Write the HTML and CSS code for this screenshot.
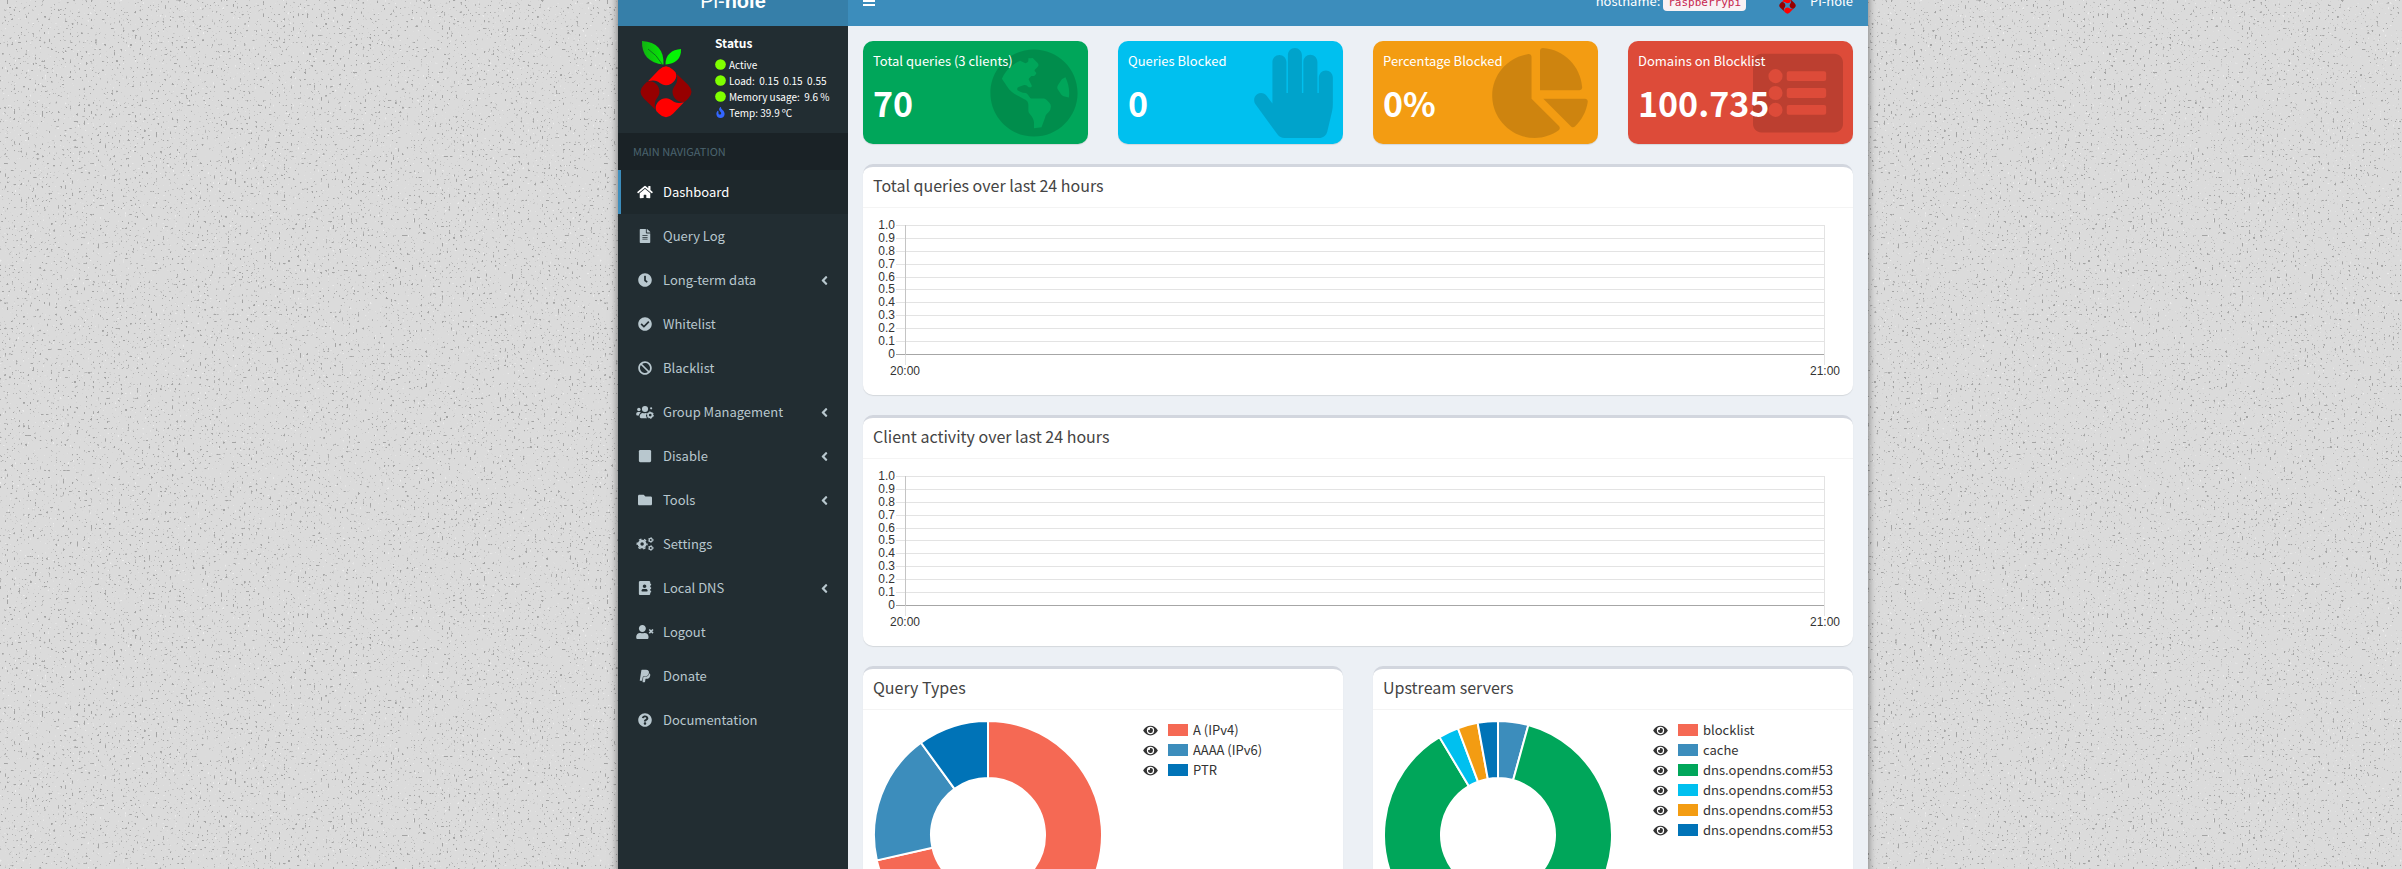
FILE: index.html
```html
<!DOCTYPE html>
<html lang="en">
<head>
<meta charset="utf-8">
<title>Pi-hole Admin Console</title>
<link rel="stylesheet" href="styles.css">
</head>
<body>
<svg class="sprite" aria-hidden="true">
  <symbol id="home" viewBox="0 0 576 512"><path d="M280.37 148.26L96 300.11V464a16 16 0 0 0 16 16l112.06-.29a16 16 0 0 0 15.92-16V368a16 16 0 0 1 16-16h64a16 16 0 0 1 16 16v95.64a16 16 0 0 0 16 16.05L464 480a16 16 0 0 0 16-16V300L295.67 148.26a12.19 12.19 0 0 0-15.3 0zM571.6 251.47L488 182.56V44.05a12 12 0 0 0-12-12h-56a12 12 0 0 0-12 12v72.61L318.47 43a48 48 0 0 0-61 0L4.34 251.47a12 12 0 0 0-1.6 16.9l25.5 31A12 12 0 0 0 45.15 301l235.22-193.74a12.19 12.19 0 0 1 15.3 0L530.9 301a12 12 0 0 0 16.9-1.6l25.5-31a12 12 0 0 0-1.7-16.93z"/></symbol>
  <symbol id="file" viewBox="0 0 384 512"><path d="M224 136V0H24C10.700 0 0 10.700 0 24v464c0 13.300 10.700 24 24 24h336c13.300 0 24-10.700 24-24V160H248c-13.200 0-24-10.800-24-24zm64 236c0 6.600-5.400 12-12 12H108c-6.600 0-12-5.400-12-12v-8c0-6.600 5.400-12 12-12h168c6.600 0 12 5.400 12 12v8zm0-64c0 6.600-5.400 12-12 12H108c-6.600 0-12-5.400-12-12v-8c0-6.600 5.400-12 12-12h168c6.600 0 12 5.400 12 12v8zm0-72v8c0 6.600-5.400 12-12 12H108c-6.600 0-12-5.400-12-12v-8c0-6.600 5.400-12 12-12h168c6.600 0 12 5.400 12 12zm96-114.100v6.100H256V0h6.100c6.400 0 12.500 2.500 17 7l97.900 98c4.500 4.500 7 10.600 7 16.900z"/></symbol>
  <symbol id="clock" viewBox="0 0 512 512"><path d="M256,8C119,8,8,119,8,256S119,504,256,504,504,393,504,256,393,8,256,8Zm92.49,313h0l-20,25a16,16,0,0,1-22.49,2.5h0l-67-49.72a40,40,0,0,1-15-31.23V112a16,16,0,0,1,16-16h32a16,16,0,0,1,16,16V256l58,42.5A16,16,0,0,1,348.49,321Z"/></symbol>
  <symbol id="check" viewBox="0 0 512 512"><path d="M504 256c0 136.967-111.033 248-248 248S8 392.967 8 256 119.033 8 256 8s248 111.033 248 248zM227.314 387.314l184-184c6.248-6.248 6.248-16.379 0-22.627l-22.627-22.627c-6.248-6.249-16.379-6.249-22.628 0L216 308.118l-70.059-70.059c-6.248-6.248-16.379-6.248-22.628 0l-22.627 22.627c-6.248 6.248-6.248 16.379 0 22.627l104 104c6.249 6.249 16.379 6.249 22.628.001z"/></symbol>
  <symbol id="ban" viewBox="0 0 512 512"><path d="M256 8C119.034 8 8 119.033 8 256s111.034 248 248 248 248-111.034 248-248S392.967 8 256 8zm130.108 117.892c65.448 65.448 70 165.481 20.677 235.637L150.47 105.216c70.204-49.356 170.226-44.735 235.638 20.676zM125.892 386.108c-65.448-65.448-70-165.481-20.677-235.637L361.53 406.784c-70.203 49.356-170.226 44.736-235.638-20.676z"/></symbol>
  <symbol id="group" viewBox="0 0 640 512"><circle cx="96" cy="160" r="64"/><circle cx="320" cy="144" r="112"/><circle cx="544" cy="120" r="40"/><path d="M64 256c-35 0-64 29-64 64v32c0 18 14 32 32 32h66c7-46 34-84 72-106-12-13-28-22-46-22zM243 288c-63 3-115 52-115 115v29c0 26 22 48 48 48h220c-20-22-32-48-36-78l-4-40 20-36 14-26c-14-7-30-11-47-12-60 28-70 8-100 0z"/><circle cx="510" cy="370" r="82" fill="none" stroke="currentColor" stroke-width="62"/><circle cx="510" cy="370" r="118" fill="none" stroke="currentColor" stroke-width="34" stroke-dasharray="62 61.600"/></symbol>
  <symbol id="square" viewBox="0 0 448 512"><path d="M400 32H48C21.500 32 0 53.500 0 80v352c0 26.500 21.500 48 48 48h352c26.500 0 48-21.500 48-48V80c0-26.500-21.500-48-48-48z"/></symbol>
  <symbol id="folder" viewBox="0 0 512 512"><path d="M464 128H272l-64-64H48C21.490 64 0 85.490 0 112v288c0 26.510 21.490 48 48 48h416c26.510 0 48-21.490 48-48V176c0-26.510-21.490-48-48-48z"/></symbol>
  <symbol id="cogs" viewBox="0 0 640 512"><g fill="none" stroke="currentColor"><circle cx="214" cy="256" r="112" stroke-width="96"/><circle cx="214" cy="256" r="178" stroke-width="52" stroke-dasharray="92 94.400" stroke-dashoffset="46"/><circle cx="530" cy="110" r="58" stroke-width="46"/><circle cx="530" cy="110" r="88" stroke-width="30" stroke-dasharray="46 46.100"/><circle cx="530" cy="402" r="58" stroke-width="46"/><circle cx="530" cy="402" r="88" stroke-width="30" stroke-dasharray="46 46.100"/></g></symbol>
  <symbol id="book" viewBox="0 0 448 512"><path d="M436 160c6.600 0 12-5.400 12-12v-40c0-6.600-5.400-12-12-12h-20V48c0-26.500-21.500-48-48-48H48C21.500 0 0 21.500 0 48v416c0 26.500 21.500 48 48 48h320c26.500 0 48-21.500 48-48v-48h20c6.600 0 12-5.400 12-12v-40c0-6.600-5.400-12-12-12h-20v-64h20c6.600 0 12-5.400 12-12v-40c0-6.600-5.400-12-12-12h-20v-64h20zm-228-32c35.300 0 64 28.700 64 64s-28.700 64-64 64-64-28.700-64-64 28.700-64 64-64zm112 236.800c0 10.600-10 19.200-22.400 19.200H118.400C106 384 96 375.400 96 364.800v-19.200c0-31.800 30.100-57.600 67.200-57.600h5c12.300 5.100 25.700 8 39.800 8s27.600-2.900 39.800-8h5c37.100 0 67.200 25.800 67.200 57.600v19.200z"/></symbol>
  <symbol id="logout" viewBox="0 0 640 512"><path d="M224 256c70.700 0 128-57.300 128-128S294.700 0 224 0 96 57.300 96 128s57.300 128 128 128zm89.600 32h-16.700c-22.200 10.200-46.900 16-72.900 16s-50.600-5.800-72.900-16h-16.700C60.200 288 0 348.200 0 422.400V464c0 26.500 21.500 48 48 48h352c26.500 0 48-21.500 48-48v-41.600c0-74.200-60.200-134.400-134.400-134.400z"/><path d="M476 164l136 136M612 164L476 300" stroke="currentColor" stroke-width="60"/></symbol>
  <symbol id="paypal" viewBox="0 0 384 512"><path d="M111.400 295.900c-3.500 19.200-17.400 108.700-21.500 134-.3 1.800-1 2.500-3 2.500H12.300c-7.600 0-13.100-6.600-12.100-13.900L58.800 46.600c1.500-9.600 10.100-16.900 20-16.900 152.300 0 165.100-3.700 204 11.400 60.100 23.300 65.600 79.500 44 140.300-21.500 62.600-72.500 89.500-140.100 90.300-43.400.7-69.500-7-75.300 24.200zM357.100 152c-1.800-1.300-2.500-1.800-3 1.300-2 11.400-5.100 22.500-8.800 33.600-39.900 113.800-150.500 103.900-204.500 103.900-6.100 0-10.100 3.300-10.900 9.400-22.600 140.400-27.100 169.700-27.100 169.700-1 7.100 3.500 12.900 10.600 12.900h63.500c8.600 0 15.700-6.300 17.400-14.900.7-5.400-1.100 6.100 14.400-91.300 4.600-22 14.300-19.700 29.300-19.700 71 0 126.400-28.800 142.900-112.300 6.500-34.800 4.600-71.400-23.800-92.600z"/></symbol>
  <symbol id="question" viewBox="0 0 512 512"><path d="M504 256c0 136.997-111.043 248-248 248S8 392.997 8 256C8 119.083 119.043 8 256 8s248 111.083 248 248zM262.655 90c-54.497 0-89.255 22.957-116.549 63.758-3.536 5.286-2.353 12.415 2.715 16.258l34.699 26.310c5.205 3.947 12.621 3.008 16.665-2.122 17.864-22.658 30.113-35.797 57.303-35.797 20.429 0 45.698 13.148 45.698 32.958 0 14.976-12.363 22.667-32.534 33.976C247.128 238.528 216 254.941 216 296v4c0 6.627 5.373 12 12 12h56c6.627 0 12-5.373 12-12v-1.333c0-28.462 83.186-29.647 83.186-106.667 0-58.002-60.165-102-116.531-102zM256 338c-25.365 0-46 20.635-46 46 0 25.364 20.635 46 46 46s46-20.636 46-46c0-25.365-20.635-46-46-46z"/></symbol>
  <symbol id="angle" viewBox="0 0 256 512"><path d="M31.700 239l136-136c9.400-9.400 24.600-9.400 33.900 0l22.600 22.600c9.400 9.400 9.400 24.600 0 33.900L127.900 256l96.400 96.400c9.400 9.400 9.400 24.600 0 33.900L201.700 409c-9.400 9.400-24.600 9.400-33.900 0l-136-136c-9.500-9.400-9.500-24.600-.1-34z"/></symbol>
  <symbol id="eye" viewBox="0 0 576 512"><path d="M572.520 241.400C518.290 135.590 410.930 64 288 64S57.680 135.640 3.480 241.410a32.350 32.350 0 0 0 0 29.190C57.710 376.410 165.070 448 288 448s230.320-71.640 284.520-177.410a32.350 32.350 0 0 0 0-29.190zM288 400a144 144 0 1 1 144-144 143.930 143.930 0 0 1-144 144zm0-240a95.310 95.310 0 0 0-25.310 3.790 47.850 47.850 0 0 1-66.900 66.900A95.780 95.780 0 1 0 288 160z"/></symbol>
  <symbol id="fire" viewBox="0 0 384 512"><path d="M216 23.860c0-23.800-30.650-32.770-44.150-13.040C48 191.850 224 200 224 288c0 35.630-29.110 64.460-64.850 63.990-35.170-.45-63.150-29.770-63.150-64.940v-85.510c0-21.700-26.470-32.230-41.430-16.500C27.800 213.160 0 261.330 0 320c0 105.870 86.130 192 192 192s192-86.130 192-192c0-170.290-168-193-168-296.140z"/></symbol>
  <symbol id="dot" viewBox="0 0 512 512"><circle cx="256" cy="256" r="248"/></symbol>
  <symbol id="bars" viewBox="0 0 12 12"><path d="M0 1h12v2H0zM0 5h12v2H0zM0 9h12v2H0z"/></symbol>
  <symbol id="globe" viewBox="0 0 496 512"><path d="M248 8C111.030 8 0 119.030 0 256s111.030 248 248 248 248-111.030 248-248S384.970 8 248 8zm82.290 357.600c-3.900 3.880-7.990 7.950-11.310 11.280-2.990 3-5.100 6.700-6.170 10.710-1.510 5.660-2.730 11.380-4.770 16.870l-17.390 46.850c-13.760 3-28 4.690-42.650 4.690v-27.380c1.690-12.620-7.640-36.260-22.630-51.250-6-6-9.370-14.140-9.370-22.630v-32.010c0-11.640-6.270-22.340-16.460-27.970-14.370-7.950-34.810-19.060-48.810-26.110-11.480-5.780-22.100-13.140-31.650-21.750l-.8-.72a114.792 114.792 0 0 1-18.060-20.740c-9.380-13.770-24.660-36.420-34.590-51.140 20.470-45.500 57.360-82.040 103.200-101.890l24.010 12.010C203.480 89.740 216 82.010 216 70.110v-11.300c7.990-1.290 16.120-2.110 24.390-2.420l28.300 28.300c6.250 6.250 6.250 16.380 0 22.630L264 112l-10.340 10.340c-3.120 3.120-3.120 8.190 0 11.310l4.690 4.690c3.120 3.120 3.120 8.190 0 11.310l-8 8a8.008 8.008 0 0 1-5.660 2.340h-8.990c-2.080 0-4.080.81-5.580 2.270l-9.920 9.650a8.008 8.008 0 0 0-1.580 9.310l15.590 31.190c2.660 5.320-1.210 11.580-7.150 11.580h-5.640c-1.930 0-3.790-.7-5.240-1.960l-9.280-8.060a16.017 16.017 0 0 0-15.550-3.100l-31.170 10.390a11.950 11.950 0 0 0-8.170 11.340c0 4.530 2.560 8.660 6.610 10.690l11.080 5.540c9.410 4.710 19.790 7.160 30.310 7.160s22.590 27.290 32 32h66.750c8.490 0 16.620 3.370 22.630 9.370l13.690 13.690a30.503 30.503 0 0 1 8.930 21.570 46.536 46.536 0 0 1-13.720 32.980zM417 274.250c-5.790-1.450-10.840-5-14.150-9.970l-17.980-26.970a23.970 23.970 0 0 1 0-26.620l19.590-29.380c2.320-3.470 5.500-6.290 9.240-8.150l12.980-6.490C440.200 193.590 448 223.870 448 256c0 8.670-.74 17.160-1.820 25.540L417 274.250z"/></symbol>
  <symbol id="hand" viewBox="0 0 448 512"><path d="M408.781 128.007C386.356 127.578 368 146.360 368 168.790V256h-8V79.790c0-22.430-18.356-41.212-40.781-40.783C297.488 39.423 280 57.169 280 79v177h-8V40.790C272 18.360 253.644-.422 231.219.007 209.488.423 192 18.169 192 40v216h-8V80.790c0-22.430-18.356-41.212-40.781-40.783C121.488 40.423 104 58.169 104 80v235.992l-31.648-43.519c-12.993-17.866-38.009-21.817-55.877-8.823-17.865 12.994-21.815 38.010-8.822 55.877l125.601 172.705A48 48 0 0 0 172.073 512h197.590c22.274 0 41.622-15.324 46.724-37.006l26.508-112.660a192.011 192.011 0 0 0 5.104-43.975V168c.001-21.831-17.487-39.577-39.218-39.993z"/></symbol>
  <symbol id="pie" viewBox="0 0 544 512"><path d="M527.790 288H290.500l158.030 158.030c6.040 6.040 15.980 6.530 22.190.68 38.700-36.460 65.320-85.610 73.130-140.860 1.340-9.460-6.510-17.850-16.060-17.850zm-15.830-64.800C503.720 103.740 408.260 8.280 288.800.04 279.680-.59 272 7.100 272 16.240V240h223.770c9.140 0 16.820-7.680 16.190-16.800zM224 288V50.710c0-9.550-8.390-17.400-17.840-16.060C86.990 51.490-4.100 155.600.14 280.370 4.500 408.510 114.830 513.590 243.030 511.980c50.400-.63 96.970-16.870 135.260-44.030 7.900-5.600 8.420-17.230 1.570-24.080L224 288z"/></symbol>
  <symbol id="list" viewBox="0 0 512 512"><path fill-rule="evenodd" d="M464 480H48c-26.510 0-48-21.490-48-48V80c0-26.510 21.490-48 48-48h416c26.510 0 48 21.490 48 48v352c0 26.510-21.490 48-48 48zM128 120a40 40 0 1 0 0 80 40 40 0 1 0 0-80zm0 96a40 40 0 1 0 0 80 40 40 0 1 0 0-80zm0 96a40 40 0 1 0 0 80 40 40 0 1 0 0-80zm288-136v-32a12 12 0 0 0-12-12H204a12 12 0 0 0-12 12v32a12 12 0 0 0 12 12h200a12 12 0 0 0 12-12zm0 96v-32a12 12 0 0 0-12-12H204a12 12 0 0 0-12 12v32a12 12 0 0 0 12 12h200a12 12 0 0 0 12-12zm0 96v-32a12 12 0 0 0-12-12H204a12 12 0 0 0-12 12v32a12 12 0 0 0 12 12h200a12 12 0 0 0 12-12z"/></symbol>
  <symbol id="berry" viewBox="0 0 52 77">
    <defs>
      <linearGradient id="leaf" x1="0" x2="1"><stop offset="0" stop-color="#12b212"/><stop offset="1" stop-color="#05e905"/></linearGradient>
      <path id="petal" d="M-18-10.500L-7-22Q0-29 7-22L9.500-19.500C12.500-14 7-6.500 0-6.500C-6.500-6.500-7-13.500-18-10.500Z"/>
    </defs>
    <path fill="url(#leaf)" d="M2 0C17 1 24 9 23.500 23.500C9 22 1.500 14 2 0Z"/>
    <path d="M8 8Q17 14 22 23" fill="none" stroke="#0c7a1c" stroke-width="1"/>
    <path fill="#05f505" d="M41 8C32 8.500 25 14 25.500 23.500C35 23 41.500 18 41 8Z"/>
    <g transform="translate(26 50.700)">
      <use href="#petal" fill="#f00"/><use href="#petal" fill="#960000" transform="rotate(90)"/><use href="#petal" fill="#f00" transform="rotate(180)"/><use href="#petal" fill="#960000" transform="rotate(270)"/>
    </g>
  </symbol>
</svg>

<div class="wrapper">
  <header class="topbar">
    <a class="brand" href="#"><span>Pi-<b>hole</b></span></a>
    <nav class="navbar">
      <button class="toggle" type="button" aria-label="Toggle navigation"><svg><use href="#bars"/></svg></button>
      <p class="host">hostname: <code>raspberrypi</code></p>
      <a class="account" href="#"><svg><use href="#berry"/></svg>Pi-hole</a>
    </nav>
  </header>

  <div class="columns">
    <aside class="sidebar">
      <section class="status">
        <svg class="logo"><use href="#berry"/></svg>
        <div>
          <h2>Status</h2>
          <p><svg class="on"><use href="#dot"/></svg>Active</p>
          <p><svg class="on"><use href="#dot"/></svg>Load:&nbsp; 0.15&nbsp; 0.15&nbsp; 0.55</p>
          <p><svg class="on"><use href="#dot"/></svg>Memory usage:&nbsp; 9.6&thinsp;%</p>
          <p><svg class="cool"><use href="#fire"/></svg>Temp: 39.9&thinsp;ºC</p>
        </div>
      </section>
      <h3 class="nav-title">MAIN NAVIGATION</h3>
      <nav class="menu">
        <a class="active" href="#"><svg><use href="#home"/></svg>Dashboard</a>
        <a href="#"><svg><use href="#file"/></svg>Query Log</a>
        <a href="#"><svg><use href="#clock"/></svg>Long-term data<svg class="more"><use href="#angle"/></svg></a>
        <a href="#"><svg><use href="#check"/></svg>Whitelist</a>
        <a href="#"><svg><use href="#ban"/></svg>Blacklist</a>
        <a href="#"><svg><use href="#group"/></svg>Group Management<svg class="more"><use href="#angle"/></svg></a>
        <a href="#"><svg><use href="#square"/></svg>Disable<svg class="more"><use href="#angle"/></svg></a>
        <a href="#"><svg><use href="#folder"/></svg>Tools<svg class="more"><use href="#angle"/></svg></a>
        <a href="#"><svg><use href="#cogs"/></svg>Settings</a>
        <a href="#"><svg><use href="#book"/></svg>Local DNS<svg class="more"><use href="#angle"/></svg></a>
        <a href="#"><svg><use href="#logout"/></svg>Logout</a>
        <a href="#"><svg><use href="#paypal"/></svg>Donate</a>
        <a href="#"><svg><use href="#question"/></svg>Documentation</a>
      </nav>
    </aside>

    <main class="content">
      <div class="tiles">
        <section class="tile green"><svg class="globe"><use href="#globe"/></svg><p>Total queries (3 clients)</p><h3>70</h3></section>
        <section class="tile aqua"><svg class="hand"><use href="#hand"/></svg><p>Queries Blocked</p><h3>0</h3></section>
        <section class="tile yellow"><svg class="pie"><use href="#pie"/></svg><p>Percentage Blocked</p><h3>0%</h3></section>
        <section class="tile red"><svg class="list"><use href="#list"/></svg><p>Domains on Blocklist</p><h3>100.735</h3></section>
      </div>

      <section class="box">
        <h3>Total queries over last 24 hours</h3>
        <div class="chart">
          <ol class="scale"><li>1.0</li><li>0.9</li><li>0.8</li><li>0.7</li><li>0.6</li><li>0.5</li><li>0.4</li><li>0.3</li><li>0.2</li><li>0.1</li><li>0</li></ol>
          <div class="plot"><i></i><i></i><i></i><i></i><i></i><i></i><i></i><i></i><i></i><i></i><i></i></div>
          <div class="times"><span>20:00</span><span>21:00</span></div>
        </div>
      </section>

      <section class="box">
        <h3>Client activity over last 24 hours</h3>
        <div class="chart">
          <ol class="scale"><li>1.0</li><li>0.9</li><li>0.8</li><li>0.7</li><li>0.6</li><li>0.5</li><li>0.4</li><li>0.3</li><li>0.2</li><li>0.1</li><li>0</li></ol>
          <div class="plot"><i></i><i></i><i></i><i></i><i></i><i></i><i></i><i></i><i></i><i></i><i></i></div>
          <div class="times"><span>20:00</span><span>21:00</span></div>
        </div>
      </section>

      <div class="pair">
        <section class="box">
          <h3>Query Types</h3>
          <div class="share">
            <svg class="donut" id="types" viewBox="-115 -115 230 230" data-slices="50 #f56954,13 #3c8dbc,7 #0073b7"></svg>
            <ul class="legend">
              <li><svg><use href="#eye"/></svg><i class="c-red"></i>A (IPv4)</li>
              <li><svg><use href="#eye"/></svg><i class="c-blue"></i>AAAA (IPv6)</li>
              <li><svg><use href="#eye"/></svg><i class="c-navy"></i>PTR</li>
            </ul>
          </div>
        </section>
        <section class="box">
          <h3>Upstream servers</h3>
          <div class="share">
            <svg class="donut" id="servers" viewBox="-115 -115 230 230" data-slices="3 #3c8dbc,61 #00a65a,2 #00c0ef,2 #f39c12,2 #0073b7"></svg>
            <ul class="legend">
              <li><svg><use href="#eye"/></svg><i class="c-red"></i>blocklist</li>
              <li><svg><use href="#eye"/></svg><i class="c-blue"></i>cache</li>
              <li><svg><use href="#eye"/></svg><i class="c-green"></i>dns.opendns.com#53</li>
              <li><svg><use href="#eye"/></svg><i class="c-aqua"></i>dns.opendns.com#53</li>
              <li><svg><use href="#eye"/></svg><i class="c-orange"></i>dns.opendns.com#53</li>
              <li><svg><use href="#eye"/></svg><i class="c-navy"></i>dns.opendns.com#53</li>
            </ul>
          </div>
        </section>
      </div>
    </main>
  </div>
</div>
<script src="charts.js"></script>
</body>
</html>
```
FILE: styles.css
```css
* { box-sizing: border-box; }
body, h2, h3, p, ul, ol { margin: 0; padding: 0; }
ul, ol { list-style: none; }
a { color: inherit; text-decoration: none; }
svg { fill: currentColor; flex: none; }
.sprite { position: absolute; width: 0; height: 0; }

body {
  height: 100vh;
  overflow: hidden;
  padding-left: 84px;
  font: 13px/20px "Noto Sans CJK SC", "Open Sans", sans-serif;
  color: #333;
  background: #dbdbdb url("data:image/svg+xml,%3Csvg xmlns='http://www.w3.org/2000/svg' width='600' height='600'%3E%3Cfilter id='d' x='0' y='0' width='100%25' height='100%25' color-interpolation-filters='sRGB'%3E%3CfeTurbulence type='fractalNoise' baseFrequency='.43' numOctaves='1' seed='4' stitchTiles='stitch'/%3E%3CfeColorMatrix values='0 0 0 0 .64 0 0 0 0 .64 0 0 0 0 .64 14 0 0 0 -9.2'/%3E%3C/filter%3E%3Cfilter id='l' x='0' y='0' width='100%25' height='100%25' color-interpolation-filters='sRGB'%3E%3CfeTurbulence type='fractalNoise' baseFrequency='.4' numOctaves='1' seed='9' stitchTiles='stitch'/%3E%3CfeColorMatrix values='0 0 0 0 .92 0 0 0 0 .92 0 0 0 0 .92 14 0 0 0 -9.8'/%3E%3C/filter%3E%3Crect width='600' height='600' filter='url(%23d)'/%3E%3Crect width='600' height='600' filter='url(%23l)'/%3E%3C/svg%3E");
}

/* The page sits scrolled a little way past the top of the bar. */
.wrapper {
  max-width: 1250px;
  margin: -24px auto 0;
  background: #222d32;
  box-shadow: 0 0 8px rgba(0, 0, 0, .5);
}

.topbar { display: flex; height: 50px; color: #fff; }
.brand {
  flex: 0 0 230px;
  background: #367fa9;
  font: 20px/50px "Liberation Sans", sans-serif;
  text-align: center;
}
.navbar {
  flex: 1;
  display: flex;
  align-items: center;
  padding: 0 15px;
  background: #3c8dbc;
}
.toggle {
  margin-right: auto;
  padding: 0;
  border: 0;
  background: none;
  color: #fff;
  line-height: 0;
}
.toggle svg { width: 12px; height: 12px; }
.host code {
  padding: 2px 5px;
  border-radius: 4px;
  background: #f9f2f4;
  color: #c7254e;
  font: 11px/18px "DejaVu Sans Mono", monospace;
}
.account { display: flex; align-items: center; gap: 14px; margin-left: 33px; }
.account svg { width: 17px; height: 25px; }

.columns { display: flex; }
.sidebar { flex: 0 0 230px; min-width: 0; color: #b8c7ce; }
.status {
  display: flex;
  gap: 23px;
  height: 107px;
  padding: 0 0 0 22px;
  align-items: center;
  color: #fff;
}
.logo { width: 52px; height: 77px; }
.status div { padding-bottom: 4px; }
.status h2 { margin-bottom: 6px; font-size: 12px; line-height: 16px; }
.status p {
  display: flex;
  align-items: center;
  gap: 3px;
  font-size: 10px;
  line-height: 16px;
  white-space: nowrap;
}
.status p svg { width: 11px; height: 11px; }
.on { color: #7fff00; }
.cool { color: #3366ff; }
.nav-title {
  margin: 0;
  padding: 0 15px;
  background: #1a2226;
  color: #4b646f;
  font-size: 11px;
  font-weight: 400;
  line-height: 37px;
}
.menu a {
  display: flex;
  align-items: center;
  height: 44px;
  padding: 0 20px 0 12px;
  border-left: 3px solid transparent;
}
.menu a svg { width: 24px; height: 14px; margin-right: 6px; }
.menu a .more { width: 7px; height: 15px; margin: 0 0 0 auto; }
.menu .active { border-color: #3c8dbc; background: #1e282c; color: #fff; }

.content { flex: 1; min-width: 0; padding: 15px; background: #ecf0f5; }
.tiles { display: grid; grid-template-columns: repeat(4, 1fr); gap: 30px; margin-bottom: 20px; }
.tile {
  position: relative;
  padding: 9px 10px 20px;
  border-radius: 10px;
  color: #fff;
  box-shadow: 0 1px 1px rgba(0, 0, 0, .1);
}
.tile svg { position: absolute; top: 7px; right: 10px; height: 90px; color: rgba(0, 0, 0, .15); }
.tile p { position: relative; margin-bottom: 10px; font-size: 13px; line-height: 22px; }
.tile h3 { position: relative; font-size: 34px; line-height: 42px; }
.globe { width: 88px; }
.hand { width: 79px; }
.pie { width: 96px; }
.list { width: 90px; }
.green { background: #00a65a; }
.aqua { background: #00c0ef; }
.yellow { background: #f39c12; }
.red { background: #dd4b39; }

.box {
  margin-bottom: 20px;
  border-top: 3px solid #d2d6de;
  border-radius: 10px;
  background: #fff;
  box-shadow: 0 1px 1px rgba(0, 0, 0, .1);
}
.box h3 {
  padding: 8px 10px 12px;
  border-bottom: 1px solid #f4f4f4;
  color: #444;
  font-size: 16px;
  font-weight: 400;
  line-height: 20px;
}
.chart {
  display: grid;
  grid-template-columns: 22px 1fr;
  padding: 11px 28px 15px 10px;
  font: 12px/12px "Liberation Sans", Arial, sans-serif;
  color: #333;
}
.scale {
  display: flex;
  flex-direction: column;
  justify-content: space-between;
  height: 141px;
  text-align: right;
}
.plot {
  position: relative;
  display: flex;
  flex-direction: column;
  justify-content: space-between;
  height: 130px;
  margin: 6px 0 0 1px;
}
.plot i { height: 1px; background: #e3e3e3; }
.plot i:last-child { background: #a6a6a6; }
.plot::before, .plot::after {
  content: "";
  position: absolute;
  top: 0;
  bottom: -10px;
  width: 1px;
  background: #e3e3e3;
}
.plot::before { left: 9px; background: linear-gradient(#c4c4c4 130px, #e3e3e3 130px); }
.plot::after { right: 0; }
.times { grid-column: 2; display: flex; justify-content: space-between; margin: 2px -15px 0 -5px; line-height: 18px; }

.pair { display: grid; grid-template-columns: 1fr 1fr; gap: 30px; }
.share { display: grid; grid-template-columns: 1fr 1fr; padding: 10px; }
.donut { width: 100%; }
.donut path { stroke: #fff; stroke-width: 2; }
.legend { padding-left: 40px; }
.legend li { display: flex; align-items: center; height: 20px; white-space: nowrap; }
.legend svg { width: 15px; height: 13px; margin-right: 10px; }
.legend i { width: 20px; height: 12px; margin-right: 5px; }
.c-red { background: #f56954; }
.c-blue { background: #3c8dbc; }
.c-green { background: #00a65a; }
.c-aqua { background: #00c0ef; }
.c-orange { background: #f39c12; }
.c-navy { background: #0073b7; }
```
FILE: charts.js
```js
// Draws each donut from its "value colour" list, clockwise from twelve o'clock.
document.querySelectorAll(".donut").forEach(function (svg) {
  var slices = svg.dataset.slices.split(",").map(function (s) { return s.split(" "); });
  var total = slices.reduce(function (sum, s) { return sum + Number(s[0]); }, 0);
  var R = 114, r = 57, at = 0;
  function point(radius, part) {
    var a = part / total * 2 * Math.PI;
    return (radius * Math.sin(a)).toFixed(2) + " " + (-radius * Math.cos(a)).toFixed(2);
  }
  slices.forEach(function (s) {
    var end = at + Number(s[0]);
    var big = (end - at) / total > 0.5 ? 1 : 0;
    var path = document.createElementNS("http://www.w3.org/2000/svg", "path");
    path.setAttribute("d", "M" + point(R, at) + "A" + R + " " + R + " 0 " + big + " 1 " + point(R, end) +
      "L" + point(r, end) + "A" + r + " " + r + " 0 " + big + " 0 " + point(r, at) + "Z");
    path.setAttribute("fill", s[1]);
    svg.appendChild(path);
    at = end;
  });
});
```
